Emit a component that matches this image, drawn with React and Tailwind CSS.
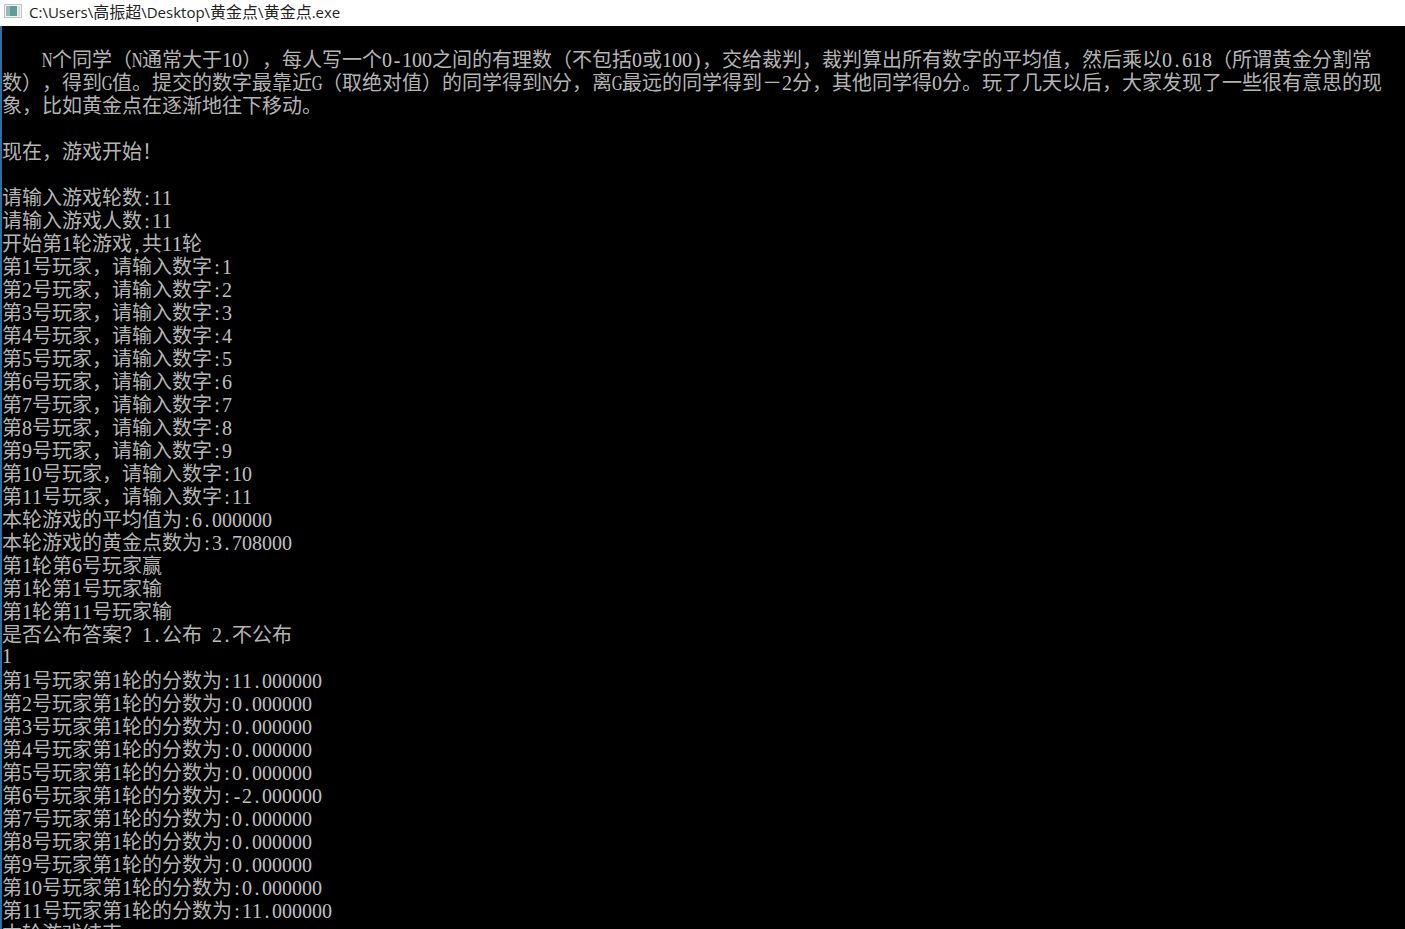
const lines = [
  '    N个同学（N通常大于10），每人写一个0-100之间的有理数（不包括0或100)，交给裁判，裁判算出所有数字的平均值，然后乘以0.618（所谓黄金分割常',
  '数），得到G值。提交的数字最靠近G（取绝对值）的同学得到N分，离G最远的同学得到－2分，其他同学得0分。玩了几天以后，大家发现了一些很有意思的现',
  '象，比如黄金点在逐渐地往下移动。',
  '',
  '现在，游戏开始！',
  '',
  '请输入游戏轮数:11',
  '请输入游戏人数:11',
  '开始第1轮游戏,共11轮',
  '第1号玩家，请输入数字:1',
  '第2号玩家，请输入数字:2',
  '第3号玩家，请输入数字:3',
  '第4号玩家，请输入数字:4',
  '第5号玩家，请输入数字:5',
  '第6号玩家，请输入数字:6',
  '第7号玩家，请输入数字:7',
  '第8号玩家，请输入数字:8',
  '第9号玩家，请输入数字:9',
  '第10号玩家，请输入数字:10',
  '第11号玩家，请输入数字:11',
  '本轮游戏的平均值为:6.000000',
  '本轮游戏的黄金点数为:3.708000',
  '第1轮第6号玩家赢',
  '第1轮第1号玩家输',
  '第1轮第11号玩家输',
  '是否公布答案？1.公布 2.不公布',
  '1',
  '第1号玩家第1轮的分数为:11.000000',
  '第2号玩家第1轮的分数为:0.000000',
  '第3号玩家第1轮的分数为:0.000000',
  '第4号玩家第1轮的分数为:0.000000',
  '第5号玩家第1轮的分数为:0.000000',
  '第6号玩家第1轮的分数为:-2.000000',
  '第7号玩家第1轮的分数为:0.000000',
  '第8号玩家第1轮的分数为:0.000000',
  '第9号玩家第1轮的分数为:0.000000',
  '第10号玩家第1轮的分数为:0.000000',
  '第11号玩家第1轮的分数为:11.000000',
  '本轮游戏结束',
]

// half-width chars sit in 10px cells, full-width runs are 20px, like the console font
function HalfCell({ ch }) {
  const wide = /[A-Z]/.test(ch)
  return (
    <span className="inline-flex justify-center w-[10px] text-[20px] font-['Liberation_Serif',serif]">
      <span className={wide ? 'inline-block scale-x-75' : 'inline-block'}>{ch}</span>
    </span>
  )
}

function ConsoleLine({ text }) {
  const runs = text.match(/[\x20-\x7e]+|[^\x20-\x7e]+/g) || []
  return (
    <div className="h-[23px] leading-[23px] whitespace-pre">
      {runs.map((run, i) =>
        /^[\x20-\x7e]/.test(run) ? (
          [...run].map((ch, j) => <HalfCell key={i + '-' + j} ch={ch} />)
        ) : (
          <span key={i} className="text-[20px] text-[#b4b4b4] [text-spacing-trim:space-all] font-['Noto_Sans_CJK_SC',sans-serif]">{run}</span>
        )
      )}
    </div>
  )
}

function ConsoleIcon() {
  return (
    <svg width="18" height="14" viewBox="0 0 18 14" className="shrink-0">
      <rect x="0.5" y="0.5" width="17" height="13" fill="#f2f2f2" stroke="#c4c4c4" />
      <rect x="2" y="2" width="11" height="10" fill="#5f9c98" />
      <rect x="2" y="2" width="4" height="10" fill="#8fbdb8" />
      <rect x="14" y="2" width="2" height="10" fill="#dcdcdc" />
    </svg>
  )
}

export default function App() {
  return (
    <div className="h-[929px] overflow-hidden flex flex-col bg-white">
      <div className="h-[26px] shrink-0 flex items-center gap-[7px] pl-[4px] pb-[4px] bg-white">
        <ConsoleIcon />
        <span className="text-[15px] text-[#222] whitespace-pre font-['Open_Sans',sans-serif]">
          C:\Users\<span className="text-[16px] font-['Noto_Sans_CJK_SC',sans-serif]">高振超</span>\Desktop\<span className="text-[16px] font-['Noto_Sans_CJK_SC',sans-serif]">黄金点</span>\<span className="text-[16px] font-['Noto_Sans_CJK_SC',sans-serif]">黄金点</span>.exe
        </span>
      </div>
      <div className="flex-1 min-h-0 overflow-hidden bg-black text-[#c0c0c0] pt-[21px] border-l-2 border-[#2f6f9f]">
        {lines.map((text, i) => (
          <ConsoleLine key={i} text={text} />
        ))}
      </div>
    </div>
  )
}
